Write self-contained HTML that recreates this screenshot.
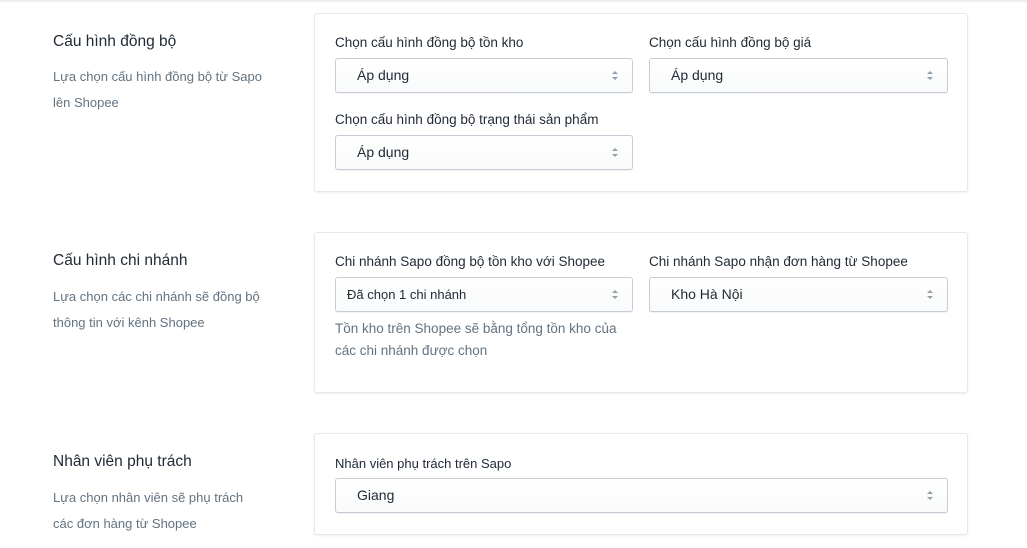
<!DOCTYPE html><html><head><meta charset="utf-8"><style>
body{margin:0;width:1027px;height:548px;background:#fff;font-family:"Liberation Sans",sans-serif;position:relative;overflow:hidden;color:#212b36}
.top{position:absolute;left:0;top:0;width:1027px;height:2px;background:#eceef0}
.card{position:absolute;left:314px;width:654px;background:#fff;border:1px solid #e6e8eb;border-radius:3px;box-shadow:0 1px 2px rgba(0,0,0,.07);box-sizing:border-box}
.h{position:absolute;left:53px;font-size:15.5px;color:#212b36}
.d{position:absolute;left:53px;font-size:13px;color:#637381;line-height:26px;white-space:nowrap}
.l{position:absolute;font-size:13.5px;color:#212b36;white-space:nowrap}
.s{position:absolute;height:35px;border:1px solid #c4cdd5;border-radius:3px;background:linear-gradient(#fff,#f9fafb);box-sizing:border-box;font-size:14px;line-height:33px;padding-left:21px;box-shadow:0 1px 0 rgba(22,29,37,.05)}
.s:after{content:"";position:absolute;right:14px;top:12px;width:0;height:0;border-left:3px solid transparent;border-right:3px solid transparent;border-bottom:3px solid #919eab}
.s:before{content:"";position:absolute;right:14px;top:18px;width:0;height:0;border-left:3px solid transparent;border-right:3px solid transparent;border-top:3px solid #919eab}
.n{position:absolute;font-size:13.5px;color:#637381;line-height:22px}
</style></head><body>
<div class="top"></div>
<div class="h" style="top:33px">Cấu hình đồng bộ</div>
<div class="d" style="top:64px">Lựa chọn cấu hình đồng bộ từ Sapo<br>lên Shopee</div>
<div class="card" style="top:13px;height:179px"></div>
<div class="l" style="left:335px;top:35px">Chọn cấu hình đồng bộ tồn kho</div>
<div class="s" style="left:335px;top:58px;width:298px">Áp dụng</div>
<div class="l" style="left:649px;top:35px">Chọn cấu hình đồng bộ giá</div>
<div class="s" style="left:649px;top:58px;width:299px">Áp dụng</div>
<div class="l" style="left:335px;top:112px">Chọn cấu hình đồng bộ trạng thái sản phẩm</div>
<div class="s" style="left:335px;top:135px;width:298px">Áp dụng</div>

<div class="h" style="top:252px">Cấu hình chi nhánh</div>
<div class="d" style="top:284px">Lựa chọn các chi nhánh sẽ đồng bộ<br>thông tin với kênh Shopee</div>
<div class="card" style="top:232px;height:161px"></div>
<div class="l" style="left:335px;top:254px">Chi nhánh Sapo đồng bộ tồn kho với Shopee</div>
<div class="s" style="left:335px;top:277px;width:298px;padding-left:11px;font-size:13px">Đã chọn 1 chi nhánh</div>
<div class="n" style="left:335px;top:318px">Tồn kho trên Shopee sẽ bằng tổng tồn kho của<br>các chi nhánh được chọn</div>
<div class="l" style="left:649px;top:254px">Chi nhánh Sapo nhận đơn hàng từ Shopee</div>
<div class="s" style="left:649px;top:277px;width:299px">Kho Hà Nội</div>

<div class="h" style="top:453px">Nhân viên phụ trách</div>
<div class="d" style="top:485px">Lựa chọn nhân viên sẽ phụ trách<br>các đơn hàng từ Shopee</div>
<div class="card" style="top:433px;height:102px"></div>
<div class="l" style="left:335px;top:456px;font-size:13px">Nhân viên phụ trách trên Sapo</div>
<div class="s" style="left:335px;top:478px;width:613px">Giang</div>
</body></html>
